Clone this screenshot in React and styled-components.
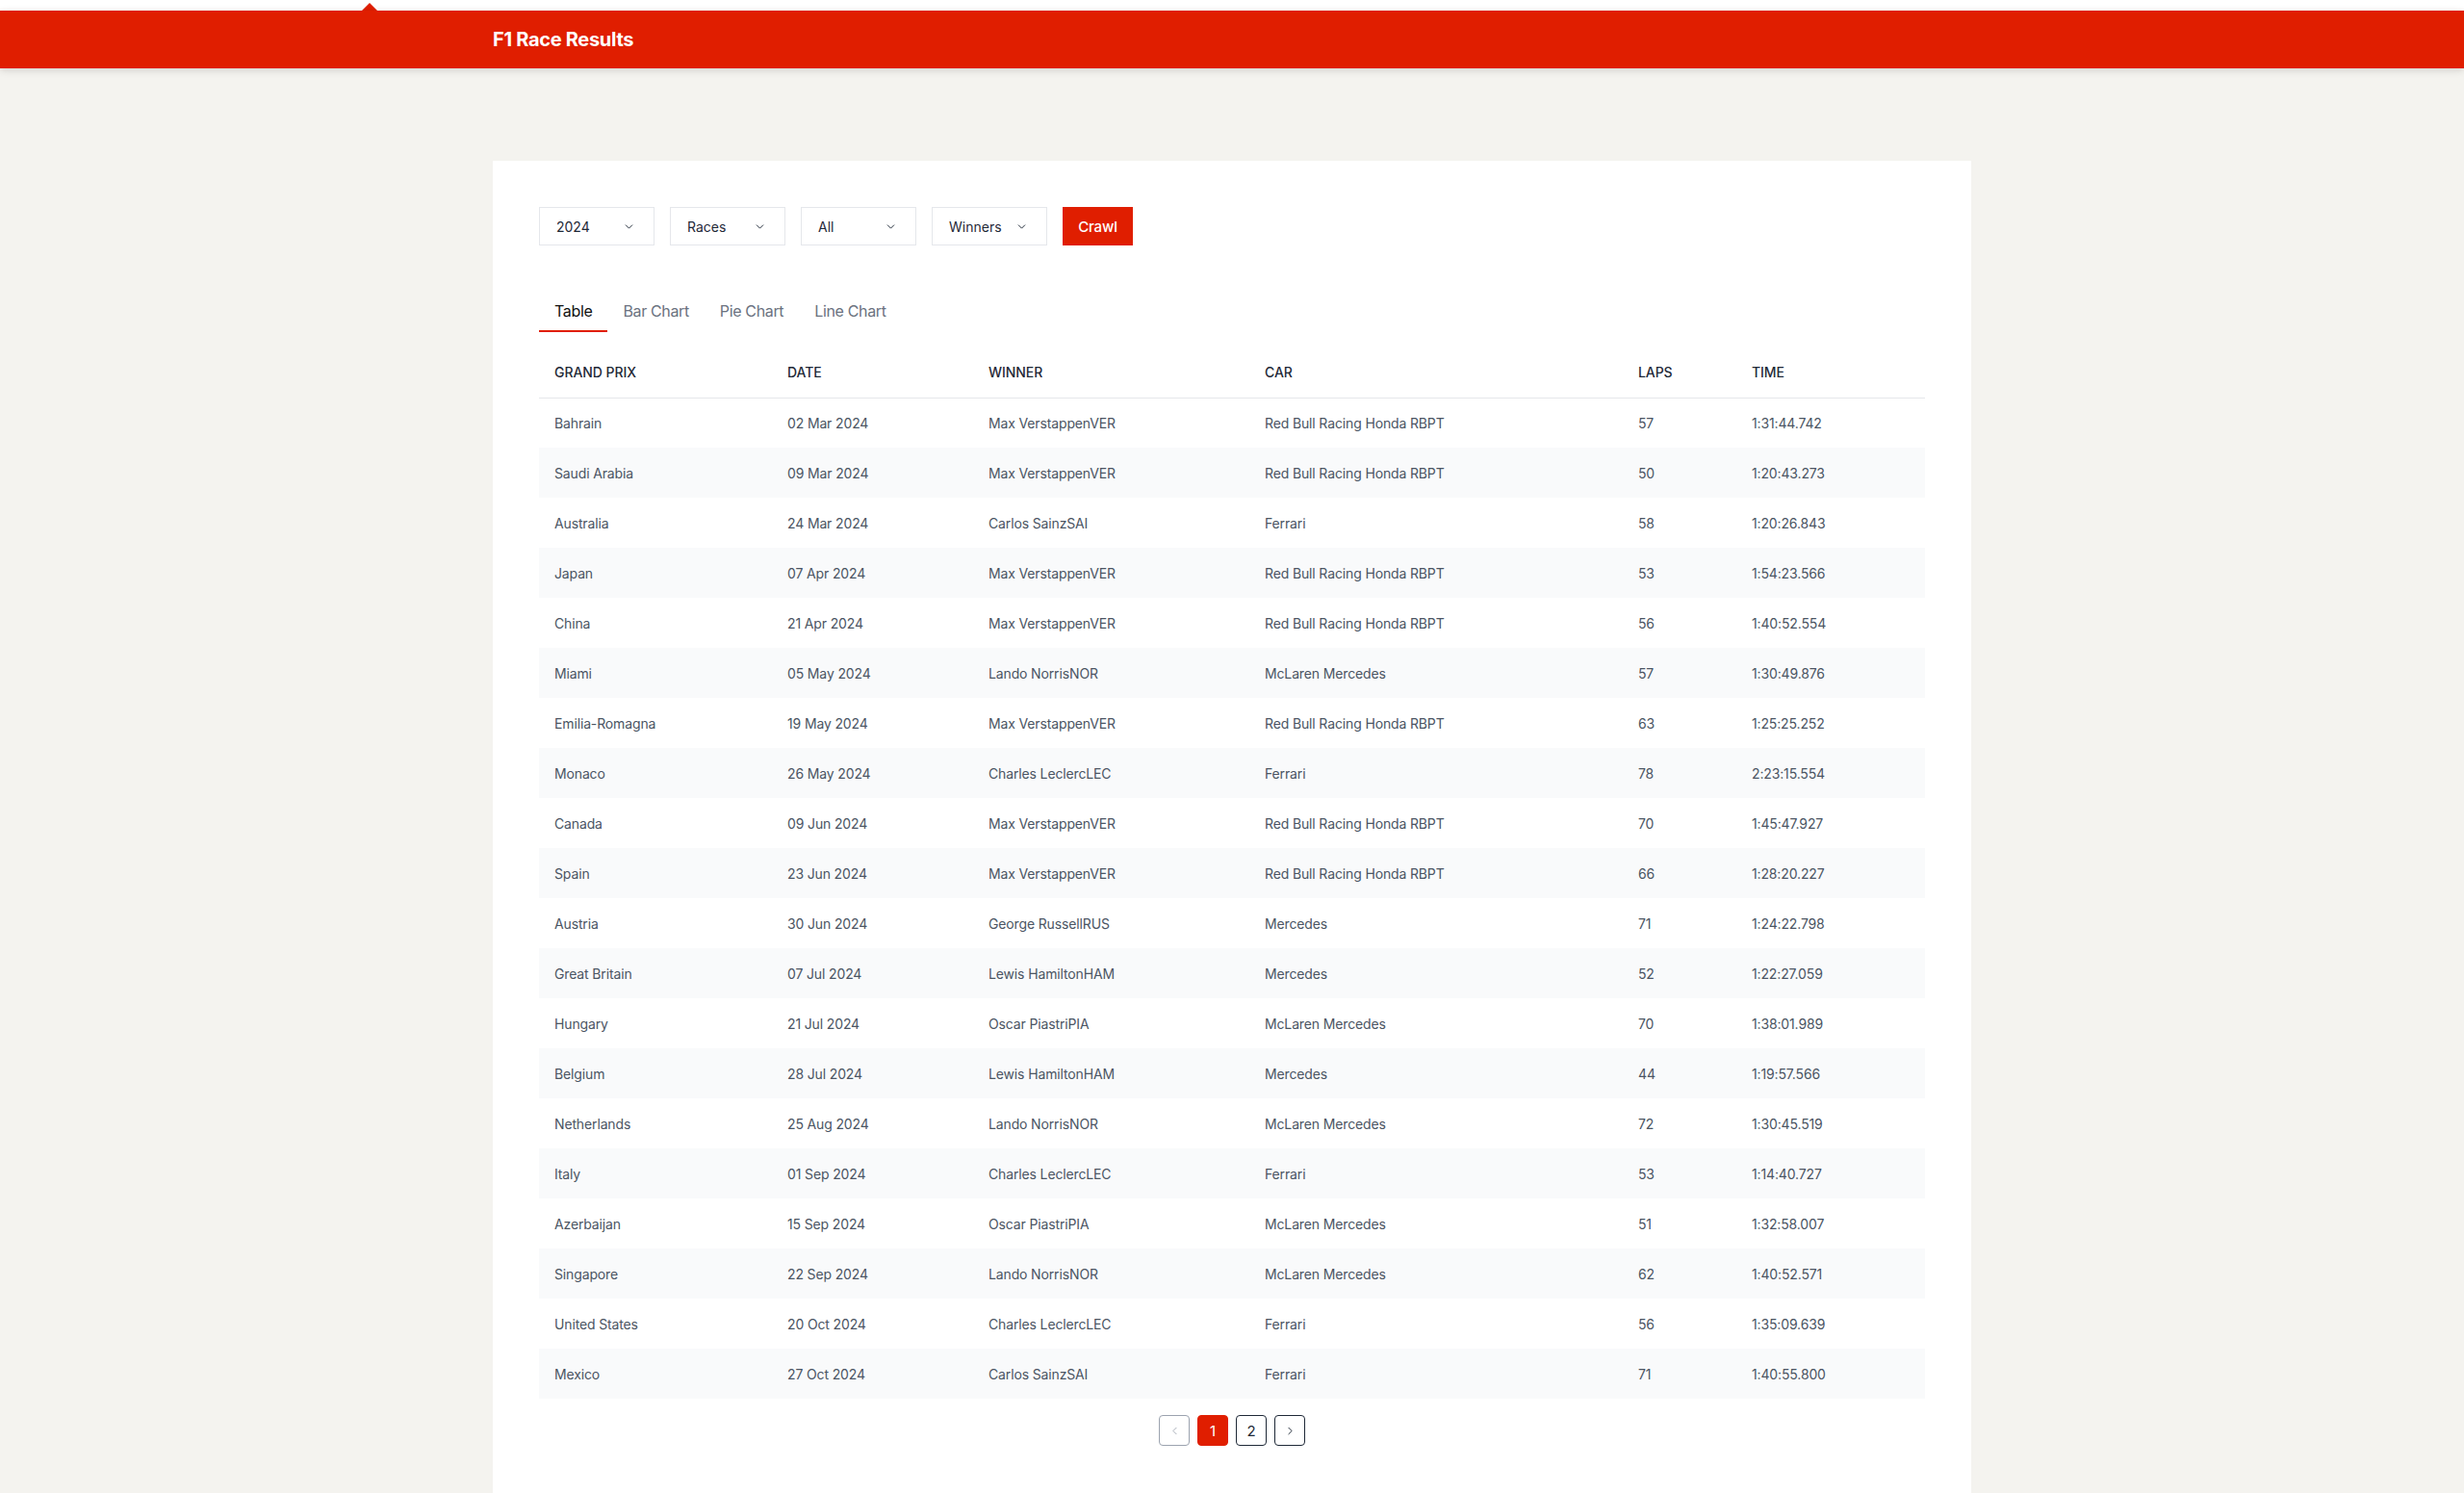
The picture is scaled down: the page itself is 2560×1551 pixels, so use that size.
import React from "react"
import styled, { createGlobalStyle } from "styled-components"
import { ChevronDown, ChevronLeft, ChevronRight } from "lucide-react"

const RED = "#e01e00"

const GlobalStyle = createGlobalStyle`
    * { box-sizing: border-box; }
    body {
        margin: 0;
        background: #f4f3ef;
        font-family: Inter, "Noto Sans", "Liberation Sans", sans-serif;
        color: #1f2937;
    }
`

const TopStrip = styled.div`
    height: 11px;
    background: #ffffff;
    position: relative;
`

const Pointer = styled.div`
    position: absolute;
    left: 376px;
    bottom: 0;
    width: 0;
    height: 0;
    border-left: 8.5px solid transparent;
    border-right: 8.5px solid transparent;
    border-bottom: 8px solid ${RED};
`

const HeaderBar = styled.header`
    height: 60px;
    background: ${RED};
    box-shadow: 0 2px 8px rgba(0, 0, 0, 0.14);
    display: flex;
    align-items: center;
    position: relative;
    z-index: 1;
`

const HeaderInner = styled.div`
    width: 1536px;
    margin: 0 auto;
`

const Title = styled.h1`
    margin: 0;
    font-size: 20px;
    font-weight: 700;
    letter-spacing: -0.015em;
    color: #ffffff;
`

const Card = styled.main`
    width: 1536px;
    margin: 96px auto 0;
    background: #ffffff;
    padding: 48px 48px 50px;
`

const Filters = styled.div`
    display: flex;
    gap: 16px;
`

const Select = styled.button`
    width: 120px;
    height: 40px;
    border: 1px solid #e5e7eb;
    background: #ffffff;
    display: flex;
    align-items: center;
    justify-content: space-between;
    padding: 0 19px 0 17px;
    font-family: inherit;
    font-size: 14px;
    color: #1f2937;
    svg { color: #1f2937; }
`

const CrawlButton = styled.button`
    height: 40px;
    width: 73px;
    border: none;
    background: ${RED};
    color: #ffffff;
    font-family: inherit;
    font-size: 15px;
    font-weight: 500;
    letter-spacing: -0.01em;
`

const Tabs = styled.nav`
    display: flex;
    margin-top: 48px;
`

const Tab = styled.button`
    background: none;
    border: none;
    border-bottom: 2px solid ${p => (p.$active ? RED : "transparent")};
    padding: 8px 16px;
    font-family: inherit;
    font-size: 16px;
    line-height: 24px;
    letter-spacing: -0.022em;
    color: ${p => (p.$active ? "#111111" : "#6b7280")};
`

const Table = styled.table`
    width: 100%;
    margin-top: 16px;
    border-collapse: collapse;
    table-layout: fixed;
`

const Th = styled.th`
    height: 52px;
    padding: 0 16px;
    text-align: left;
    font-size: 14px;
    font-weight: 500;
    letter-spacing: -0.005em;
    text-transform: uppercase;
    color: #1f2937;
    border-bottom: 1px solid #e5e7eb;
`

const Row = styled.tr`
    background: ${p => (p.$alt ? "#f9fafb" : "#ffffff")};
`

const Td = styled.td`
    height: 52px;
    padding: 0 16px;
    font-size: 14px;
    letter-spacing: -0.01em;
    color: #4b5563;
`

const Pagination = styled.div`
    display: flex;
    justify-content: center;
    gap: 8px;
    margin-top: 17px;
`

const PageButton = styled.button`
    width: 32px;
    height: 32px;
    border-radius: 4px;
    display: flex;
    align-items: center;
    justify-content: center;
    padding: 0;
    font-family: inherit;
    font-size: 15px;
    border: 1px solid ${p => (p.$active ? RED : p.$disabled ? "#9ca3af" : "#1f2937")};
    background: ${p => (p.$active ? RED : "#ffffff")};
    color: ${p => (p.$active ? "#ffffff" : p.$disabled ? "#9ca3af" : "#1f2937")};
`

const columns = [
    { label: "Grand Prix", width: 242 },
    { label: "Date", width: 209 },
    { label: "Winner", width: 287 },
    { label: "Car", width: 388 },
    { label: "Laps", width: 118 },
    { label: "Time", width: 196 },
]

const RBR = "Red Bull Racing Honda RBPT"
const MCL = "McLaren Mercedes"

const races = [
    ["Bahrain", "02 Mar 2024", "Max VerstappenVER", RBR, "57", "1:31:44.742"],
    ["Saudi Arabia", "09 Mar 2024", "Max VerstappenVER", RBR, "50", "1:20:43.273"],
    ["Australia", "24 Mar 2024", "Carlos SainzSAI", "Ferrari", "58", "1:20:26.843"],
    ["Japan", "07 Apr 2024", "Max VerstappenVER", RBR, "53", "1:54:23.566"],
    ["China", "21 Apr 2024", "Max VerstappenVER", RBR, "56", "1:40:52.554"],
    ["Miami", "05 May 2024", "Lando NorrisNOR", MCL, "57", "1:30:49.876"],
    ["Emilia-Romagna", "19 May 2024", "Max VerstappenVER", RBR, "63", "1:25:25.252"],
    ["Monaco", "26 May 2024", "Charles LeclercLEC", "Ferrari", "78", "2:23:15.554"],
    ["Canada", "09 Jun 2024", "Max VerstappenVER", RBR, "70", "1:45:47.927"],
    ["Spain", "23 Jun 2024", "Max VerstappenVER", RBR, "66", "1:28:20.227"],
    ["Austria", "30 Jun 2024", "George RussellRUS", "Mercedes", "71", "1:24:22.798"],
    ["Great Britain", "07 Jul 2024", "Lewis HamiltonHAM", "Mercedes", "52", "1:22:27.059"],
    ["Hungary", "21 Jul 2024", "Oscar PiastriPIA", MCL, "70", "1:38:01.989"],
    ["Belgium", "28 Jul 2024", "Lewis HamiltonHAM", "Mercedes", "44", "1:19:57.566"],
    ["Netherlands", "25 Aug 2024", "Lando NorrisNOR", MCL, "72", "1:30:45.519"],
    ["Italy", "01 Sep 2024", "Charles LeclercLEC", "Ferrari", "53", "1:14:40.727"],
    ["Azerbaijan", "15 Sep 2024", "Oscar PiastriPIA", MCL, "51", "1:32:58.007"],
    ["Singapore", "22 Sep 2024", "Lando NorrisNOR", MCL, "62", "1:40:52.571"],
    ["United States", "20 Oct 2024", "Charles LeclercLEC", "Ferrari", "56", "1:35:09.639"],
    ["Mexico", "27 Oct 2024", "Carlos SainzSAI", "Ferrari", "71", "1:40:55.800"],
]

const filters = ["2024", "Races", "All", "Winners"]
const tabs = ["Table", "Bar Chart", "Pie Chart", "Line Chart"]

export default function App() {
    const [activeTab, setActiveTab] = React.useState("Table")

    return (
        <>
            <GlobalStyle />
            <TopStrip>
                <Pointer />
            </TopStrip>
            <HeaderBar>
                <HeaderInner>
                    <Title>F1 Race Results</Title>
                </HeaderInner>
            </HeaderBar>
            <Card>
                <Filters>
                    {filters.map(f => (
                        <Select key={f} type="button">
                            {f}
                            <ChevronDown size={13} strokeWidth={1.8} />
                        </Select>
                    ))}
                    <CrawlButton type="button">Crawl</CrawlButton>
                </Filters>
                <Tabs>
                    {tabs.map(t => (
                        <Tab key={t} $active={t === activeTab} onClick={() => setActiveTab(t)}>
                            {t}
                        </Tab>
                    ))}
                </Tabs>
                <Table>
                    <colgroup>
                        {columns.map(c => (
                            <col key={c.label} style={{ width: c.width }} />
                        ))}
                    </colgroup>
                    <thead>
                        <tr>
                            {columns.map(c => (
                                <Th key={c.label}>{c.label}</Th>
                            ))}
                        </tr>
                    </thead>
                    <tbody>
                        {races.map((r, i) => (
                            <Row key={r[0]} $alt={i % 2 === 1}>
                                {r.map((cell, j) => (
                                    <Td key={j}>{cell}</Td>
                                ))}
                            </Row>
                        ))}
                    </tbody>
                </Table>
                <Pagination>
                    <PageButton $disabled>
                        <ChevronLeft size={13} strokeWidth={1.6} />
                    </PageButton>
                    <PageButton $active>1</PageButton>
                    <PageButton>2</PageButton>
                    <PageButton>
                        <ChevronRight size={13} strokeWidth={1.8} />
                    </PageButton>
                </Pagination>
            </Card>
        </>
    )
}
